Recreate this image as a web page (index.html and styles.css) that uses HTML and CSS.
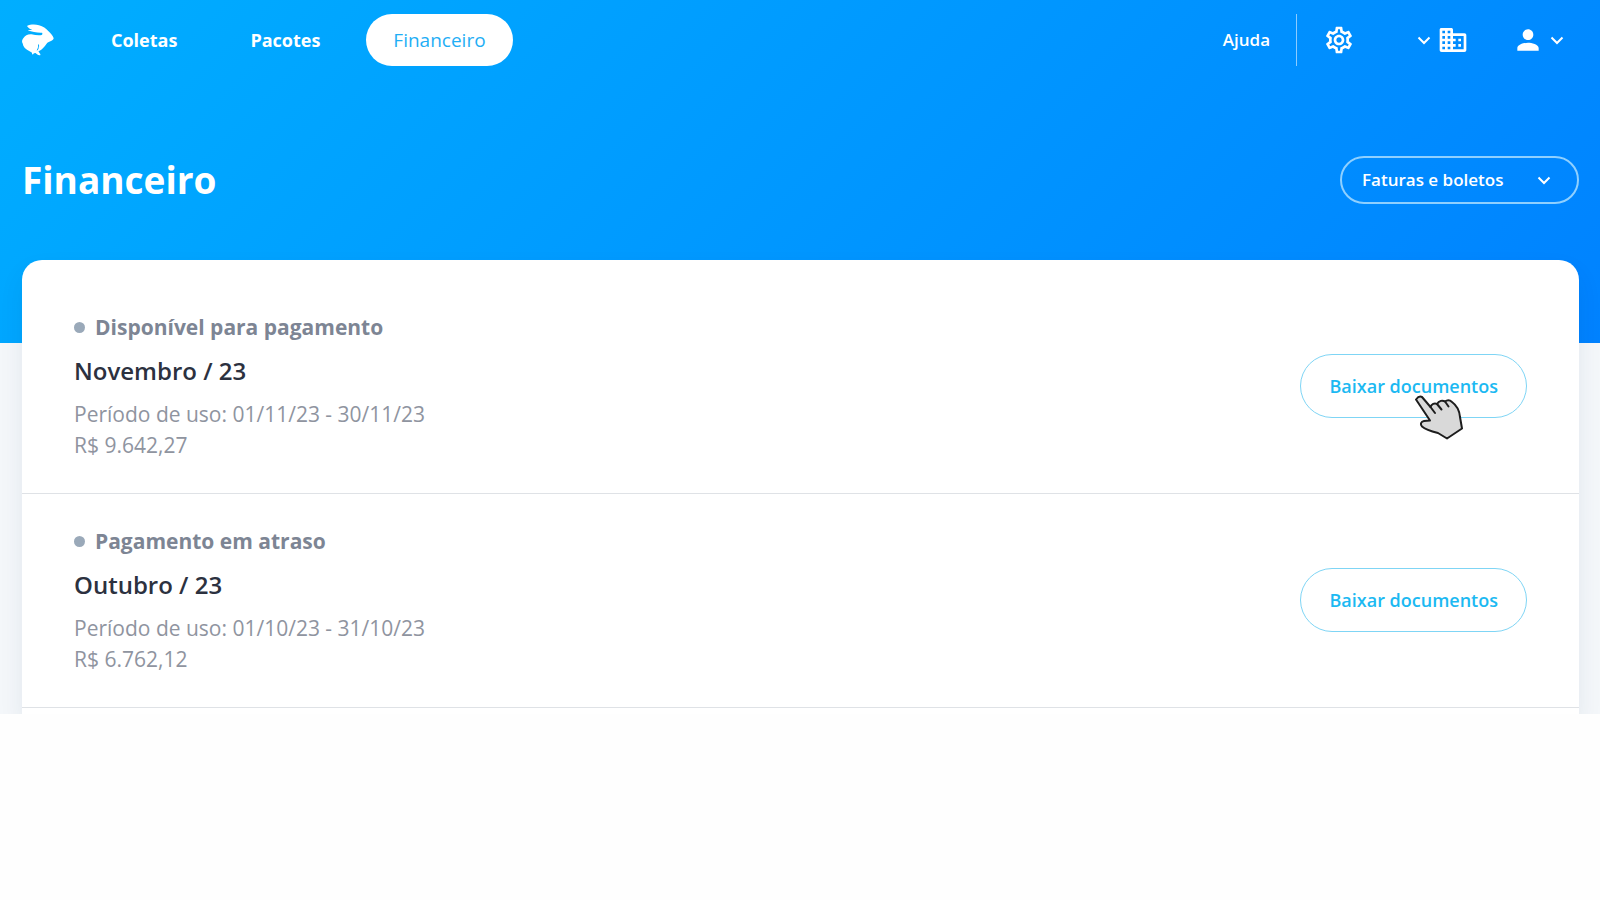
FILE: index.html
```html
<!DOCTYPE html>
<html lang="pt-BR">
<head>
  <title>Financeiro</title>
  <meta charset="utf-8">
  <meta name="viewport" content="width=device-width, initial-scale=1">
  <link rel="stylesheet" href="styles.css">
</head>
<body>
  <div class="page">
    <div class="hero">
      <header class="header">
        <a href="#" class="logo" aria-label="Início">
          <svg width="32" height="32" viewBox="0 0 32 32" fill="currentColor" aria-hidden="true">
            <path d="M5 2C8 .4 13 .2 17 1.200c4 1 7 3 9.500 6 2.500 2.200 4.500 4.500 5.200 7-.3 1.800-2.600 3-5 3.700-2 .8-2.700 2.700-4.200 4.500-1.800 2.300-4 3.800-6 4.800.2 1.200 1.800 2 2 3.700-1.500 1.200-3.500-.6-5-1.900-.6.200-1.500-.1-2 .8-.4 1-1.500.8-1.500-.3 0-1-.8-1.500-2-2C3.500 25.500 1 22.500.7 19.500-.5 18 .1 15.500 1.500 14c1.500-2.700 4.500-4 8-3.700 3.500.8 7 1.400 10.200.8.700-.6.900-1.600.4-2.400C16 9 10 8 5.800 6.300c1-.4 3-.2 4.500-.2C8.500 5 6 4 5 2z"/>
            <path class="logo-line" d="M16.500 20.500c.4 2.300-.3 4-1.300 5.800"/>
          </svg>
        </a>
        <nav class="nav">
          <a href="#coletas" class="nav-link">Coletas</a>
          <a href="#pacotes" class="nav-link">Pacotes</a>
          <a href="#financeiro" class="nav-link nav-link-active" aria-current="page">Financeiro</a>
        </nav>
        <div class="tools">
          <a href="#ajuda" class="help">Ajuda</a>
          <button class="tool" type="button" aria-label="Configurações">
            <svg width="32" height="32" viewBox="0 0 24 24" fill="currentColor" aria-hidden="true">
              <path d="M19.430 12.980c.04-.32.07-.64.07-.98 0-.34-.03-.66-.07-.98l2.110-1.650c.19-.15.24-.42.12-.64l-2-3.460c-.09-.16-.26-.25-.44-.25-.06 0-.12.01-.17.03l-2.490 1c-.52-.4-1.080-.73-1.690-.98l-.38-2.650C14.460 2.180 14.250 2 14 2h-4c-.25 0-.46.18-.49.42l-.38 2.650c-.61.25-1.170.59-1.690.98l-2.490-1c-.06-.02-.12-.03-.18-.03-.17 0-.34.09-.43.25l-2 3.460c-.13.22-.07.49.12.64l2.110 1.650c-.04.32-.07.65-.07.98 0 .33.03.66.07.98l-2.110 1.650c-.19.15-.24.42-.12.64l2 3.460c.09.16.26.25.44.25.06 0 .12-.01.17-.03l2.490-1c.52.4 1.080.73 1.690.98l.38 2.650c.03.24.24.42.49.42h4c.25 0 .46-.18.49-.42l.38-2.650c.61-.25 1.170-.59 1.690-.98l2.490 1c.06.02.12.03.18.03.17 0 .34-.09.43-.25l2-3.460c.12-.22.07-.49-.12-.64l-2.110-1.650zm-1.980-1.710c.04.31.05.52.05.73 0 .21-.02.43-.05.73l-.14 1.130.89.7 1.080.84-.7 1.210-1.270-.51-1.040-.42-.9.68c-.43.32-.84.56-1.250.73l-1.060.43-.16 1.130-.2 1.350h-1.400l-.19-1.350-.16-1.130-1.060-.43c-.43-.18-.83-.41-1.230-.71l-.91-.7-1.060.43-1.270.51-.7-1.210 1.080-.84.89-.7-.14-1.130c-.03-.31-.05-.54-.05-.74s.02-.43.05-.73l.14-1.130-.89-.7-1.080-.84.7-1.210 1.270.51 1.040.42.9-.68c.43-.32.84-.56 1.250-.73l1.060-.43.16-1.130.2-1.350h1.390l.19 1.350.16 1.130 1.060.43c.43.18.83.41 1.230.71l.91.7 1.060-.43 1.270-.51.7 1.210-1.070.85-.89.7.14 1.130zM12 8c-2.210 0-4 1.790-4 4s1.790 4 4 4 4-1.790 4-4-1.790-4-4-4zm0 6c-1.100 0-2-.9-2-2s.9-2 2-2 2 .9 2 2-.9 2-2 2z"/>
            </svg>
          </button>
          <button class="tool tool-company" type="button" aria-label="Empresa">
            <svg class="chevron" width="14" height="14" viewBox="0 0 14 14" aria-hidden="true">
              <path d="M1.500 4.500 7 10l5.500-5.500"/>
            </svg>
            <svg width="32" height="32" viewBox="0 0 24 24" fill="currentColor" aria-hidden="true">
              <path d="M12 7V4.500C12 3.500 11.500 3 10.500 3h-7C2.500 3 2 3.500 2 4.500v15c0 1 .5 1.500 1.500 1.500h17c1 0 1.500-.5 1.500-1.500v-11C22 7.500 21.500 7 20.500 7H12zM6 19H4v-2h2v2zm0-4H4v-2h2v2zm0-4H4V9h2v2zm0-4H4V5h2v2zm4 12H8v-2h2v2zm0-4H8v-2h2v2zm0-4H8V9h2v2zm0-4H8V5h2v2zm10 12h-8v-2h2v-2h-2v-2h2v-2h-2V9h8v10zm-2-8h-2v2h2v-2zm0 4h-2v2h2v-2z"/>
            </svg>
          </button>
          <button class="tool tool-user" type="button" aria-label="Minha conta">
            <svg width="32" height="32" viewBox="0 0 24 24" fill="currentColor" aria-hidden="true">
              <path d="M12 12c2.210 0 4-1.790 4-4s-1.790-4-4-4-4 1.790-4 4 1.790 4 4 4zm0 2c-2.670 0-8 1.340-8 4v2h16v-2c0-2.660-5.330-4-8-4z"/>
            </svg>
            <svg class="chevron" width="14" height="14" viewBox="0 0 14 14" aria-hidden="true">
              <path d="M1.500 4.500 7 10l5.500-5.500"/>
            </svg>
          </button>
        </div>
      </header>
      <div class="heading">
        <h1 class="title">Financeiro</h1>
        <div class="filter">
          <select class="filter-select" aria-label="Tipo de documento">
            <option>Faturas e boletos</option>
          </select>
          <svg class="chevron filter-chevron" width="14" height="14" viewBox="0 0 14 14" aria-hidden="true">
            <path d="M1.500 4.500 7 10l5.500-5.500"/>
          </svg>
        </div>
      </div>
    </div>
    <main class="card">
      <article class="invoice">
        <div class="invoice-info">
          <p class="status">Disponível para pagamento</p>
          <h2 class="month">Novembro / 23</h2>
          <p class="detail">Período de uso: 01/11/23 - 30/11/23</p>
          <p class="detail">R$ 9.642,27</p>
        </div>
        <div class="action">
          <button class="download" type="button">Baixar documentos</button>
          <svg class="pointer" width="50" height="46" viewBox="0 0 50 46" aria-hidden="true">
            <path d="M2 4.500C3.500 2.500 6 1 8 2l8.500 10c1-3 4-4.500 6.500-3 2-3.500 5.500-4 8-2.500 2.500-2 5-1.500 7 .5 5.500 4 7.500 9 8 15l2 11.500L33 43.500 24 38c-6-1.500-12-3-16-6.500-2-2.500-1-5 2-5.500l6-.5L2 4.500z"/>
            <path d="m16.500 12 4.500 6M23 9l4.500 5.500M31 6.500l3.500 5"/>
          </svg>
        </div>
      </article>
      <article class="invoice">
        <div class="invoice-info">
          <p class="status">Pagamento em atraso</p>
          <h2 class="month">Outubro / 23</h2>
          <p class="detail">Período de uso: 01/10/23 - 31/10/23</p>
          <p class="detail">R$ 6.762,12</p>
        </div>
        <div class="action">
          <button class="download" type="button">Baixar documentos</button>
        </div>
      </article>
    </main>
  </div>
</body>
</html>
```
FILE: styles.css
```css
*, *::before, *::after {
  margin: 0;
  padding: 0;
  box-sizing: border-box;
}

body {
  background-color: #FEFEFE;
  font-family: "Open Sans", sans-serif;
}

a {
  color: inherit;
  text-decoration: none;
}

button, select {
  font-family: inherit;
  cursor: pointer;
}

svg {
  display: block;
  flex-shrink: 0;
}

.page {
  overflow: hidden;
  background-color: #F4F7FA;
}

.hero {
  padding: 14px 21px 139px 22px;
  background-image: linear-gradient(135deg, #00AEFF, #0082FF);
  color: #FFFFFF;
}

.header {
  display: flex;
  align-items: center;
  height: 52px;
}

.logo {
  margin-right: 30px;
}

.logo-line {
  fill: none;
  stroke: #00ABFF;
}

.nav {
  display: flex;
  gap: 19px;
}

.nav-link {
  padding: 0 27px;
  border-radius: 26px;
  font-size: 18px;
  font-weight: 700;
  line-height: 52px;
}

.nav-link-active {
  background-color: #FFFFFF;
  color: #1FAEF5;
  font-size: 19px;
  font-weight: 400;
}

.tools {
  display: flex;
  align-items: center;
  margin-left: auto;
  padding-right: 15px;
}

.help {
  padding-right: 26px;
  border-right: 1px solid #8CCBFF;
  font-size: 17px;
  font-weight: 600;
  line-height: 52px;
}

.tool {
  display: flex;
  align-items: center;
  gap: 6px;
  margin-left: 26px;
  border: none;
  background: none;
  color: #FFFFFF;
}

.tool-company {
  margin-left: 62px;
}

.tool-user {
  margin-left: 43px;
}

.chevron {
  fill: none;
  stroke: #FFFFFF;
  stroke-width: 2px;
}

.heading {
  display: flex;
  justify-content: space-between;
  align-items: center;
  margin-top: 90px;
}

.title {
  font-size: 37px;
  line-height: 48px;
}

.filter {
  position: relative;
}

.filter-select {
  appearance: none;
  width: 239px;
  height: 48px;
  padding: 0 60px 2px 20px;
  border: 2px solid #8FD0FF;
  border-radius: 24px;
  background: none;
  color: #FFFFFF;
  font-size: 17px;
  font-weight: 600;
}

.filter-chevron {
  position: absolute;
  top: 17px;
  right: 28px;
  pointer-events: none;
}

.card {
  margin: -83px 21px 0 22px;
  padding: 20px 0 6px;
  border-radius: 20px 20px 0 0;
  background-color: #FFFFFF;
  box-shadow: 0 12px 24px rgba(30, 50, 90, 0.08);
}

.invoice {
  display: flex;
  justify-content: space-between;
  align-items: center;
  padding: 31px 52px 32px;
  border-bottom: 1px solid #DFE2E6;
}

.status {
  display: flex;
  align-items: center;
  gap: 10px;
  color: #7D8594;
  font-size: 21px;
  font-weight: 700;
  line-height: 32px;
}

.status::before {
  content: "";
  width: 11px;
  height: 11px;
  border-radius: 50%;
  background-color: #9AA9B9;
}

.month {
  margin: 12px 0;
  color: #2C313F;
  font-size: 24px;
  font-weight: 600;
  line-height: 32px;
}

.detail {
  color: #8F949F;
  font-size: 21px;
  line-height: 31px;
}

.action {
  position: relative;
}

.download {
  height: 64px;
  padding: 0 28px;
  border: 1px solid #7FD5F5;
  border-radius: 32px;
  background-color: #FFFFFF;
  color: #1CB9F2;
  font-size: 18px;
  font-weight: 600;
}

.pointer {
  position: absolute;
  top: 41px;
  right: 63px;
  fill: #D9D9D9;
  stroke: #1D1D1D;
  stroke-width: 2px;
  stroke-linejoin: round;
  stroke-linecap: round;
  pointer-events: none;
}
```
